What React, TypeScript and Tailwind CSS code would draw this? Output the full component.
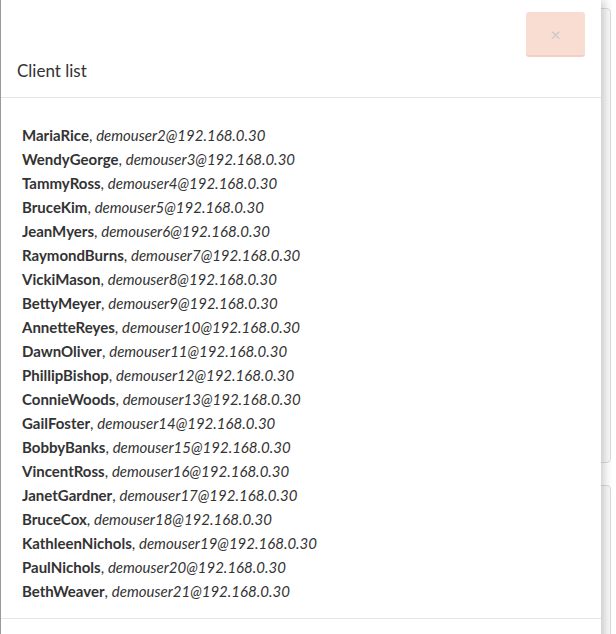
const clients = [
  ["MariaRice", "demouser2@192.168.0.30"],
  ["WendyGeorge", "demouser3@192.168.0.30"],
  ["TammyRoss", "demouser4@192.168.0.30"],
  ["BruceKim", "demouser5@192.168.0.30"],
  ["JeanMyers", "demouser6@192.168.0.30"],
  ["RaymondBurns", "demouser7@192.168.0.30"],
  ["VickiMason", "demouser8@192.168.0.30"],
  ["BettyMeyer", "demouser9@192.168.0.30"],
  ["AnnetteReyes", "demouser10@192.168.0.30"],
  ["DawnOliver", "demouser11@192.168.0.30"],
  ["PhillipBishop", "demouser12@192.168.0.30"],
  ["ConnieWoods", "demouser13@192.168.0.30"],
  ["GailFoster", "demouser14@192.168.0.30"],
  ["BobbyBanks", "demouser15@192.168.0.30"],
  ["VincentRoss", "demouser16@192.168.0.30"],
  ["JanetGardner", "demouser17@192.168.0.30"],
  ["BruceCox", "demouser18@192.168.0.30"],
  ["KathleenNichols", "demouser19@192.168.0.30"],
  ["PaulNichols", "demouser20@192.168.0.30"],
  ["BethWeaver", "demouser21@192.168.0.30"],
]

export default function App() {
  return (
    <div className="relative w-[616px] h-[634px] overflow-hidden bg-white text-[#333]" style={{ fontFamily: "Lato, 'Noto Sans', sans-serif" }}>
      {/* page cards behind the dialog */}
      <div className="flex flex-col gap-[22px] pt-[8px] pl-[300px] w-[611px]">
        <div className="h-[455px] border border-[#ddd] rounded-[4px] bg-[#fafafa]" />
        <div className="h-[200px] border border-[#ddd] rounded-[4px] bg-[#fafafa]" />
      </div>

      {/* dialog */}
      <div className="absolute left-0 top-0 w-[601px] h-[660px] bg-white border-l border-[#999] shadow-[4px_0_8px_rgba(0,0,0,0.18)]">
        <div className="pl-[16px] pr-[17px] pt-[12px] pb-[14px] border-b border-[#e5e5e5]">
          <div className="flex justify-end">
            <button className="w-[59px] h-[45px] mr-[-1px] rounded-[3px] bg-[#f9dcd2] border-b-2 border-[#f4d0c4] text-[#c9c9c9] text-[18px] leading-none">
              ×
            </button>
          </div>
          <h4 className="mt-[2px] text-[17px] leading-[24px] font-normal text-[#333]">Client list</h4>
        </div>
        <div className="pl-[21px] pt-[25px] pb-[15px] border-b border-[#e5e5e5]">
          <ul className="flex flex-col">
            {clients.map(([name, email]) => (
              <li key={email} className="text-[15px] leading-[24px]">
                <b className="font-bold">{name}</b>, <i className="italic">{email}</i>
              </li>
            ))}
          </ul>
        </div>
      </div>
    </div>
  )
}
